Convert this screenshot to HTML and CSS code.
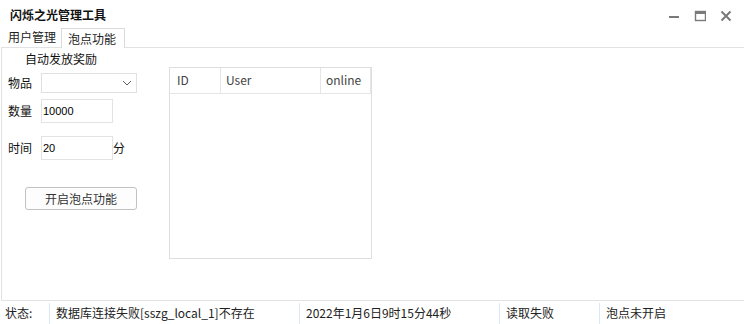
FILE: index.html
```html
<!DOCTYPE html>
<html lang="zh-CN">
<head>
<meta charset="utf-8">
<title>闪烁之光管理工具</title>
<link rel="stylesheet" href="styles.css">
</head>
<body>
<div class="window">
  <div class="titlebar">
    <div class="title">闪烁之光管理工具</div>
    <div class="controls">
      <svg class="ctl" width="12" height="12" viewBox="0 0 12 12"><rect x="1" y="6" width="10" height="2" fill="#7a7a7a"/></svg>
      <svg class="ctl" width="12" height="12" viewBox="0 0 12 12"><rect x="1.5" y="1.5" width="10" height="9" fill="none" stroke="#7a7a7a" stroke-width="1.4"/><rect x="1" y="1" width="11" height="3" fill="#7a7a7a"/></svg>
      <svg class="ctl" width="12" height="12" viewBox="0 0 12 12"><path d="M1.5 1.5 L10.5 10.5 M10.5 1.5 L1.5 10.5" stroke="#7a7a7a" stroke-width="2"/></svg>
    </div>
  </div>
  <div class="tabs">
    <div class="tab">用户管理</div>
    <div class="tab active">泡点功能</div>
  </div>
  <div class="panel">
    <div class="left">
      <div class="group-title">自动发放奖励</div>
      <div class="row row-combo">
        <span class="label">物品</span>
        <div class="combo">
          <svg width="10" height="6" viewBox="0 0 10 6"><path d="M1 1 L5 5 L9 1" fill="none" stroke="#606060" stroke-width="1"/></svg>
        </div>
      </div>
      <div class="row row-qty">
        <span class="label">数量</span>
        <div class="input">10000</div>
      </div>
      <div class="row row-time">
        <span class="label">时间</span>
        <div class="input">20</div>
        <span class="unit">分</span>
      </div>
      <div class="button">开启泡点功能</div>
    </div>
    <div class="listview">
      <div class="lv-header">
        <div class="col col-id">ID</div>
        <div class="col col-user">User</div>
        <div class="col col-online">online</div>
      </div>
    </div>
  </div>
  <div class="statusbar">
    <div class="st st-label">状态:</div>
    <div class="st st-db">数据库连接失败[sszg_local_1]不存在</div>
    <div class="st st-time">2022年1月6日9时15分44秒</div>
    <div class="st st-read">读取失败</div>
    <div class="st st-pd">泡点未开启</div>
  </div>
</div>
</body>
</html>
```
FILE: styles.css
```css
* { box-sizing: border-box; }
html, body { margin: 0; padding: 0; background: #fff; }
body {
  font-family: "Noto Sans CJK SC", "Microsoft YaHei", sans-serif;
  font-size: 12px;
  color: #111;
  width: 744px;
  height: 324px;
  overflow: hidden;
}
.window { width: 744px; height: 324px; display: flex; flex-direction: column; }

.titlebar {
  height: 27px;
  display: flex;
  align-items: center;
  justify-content: space-between;
  padding: 2px 0 0 10px;
}
.title { font-weight: bold; line-height: 14px; font-size: 12px; color: #111; }
.controls { display: flex; gap: 14px; padding-right: 12px; padding-top: 2px; }
.ctl { display: block; }

.tabs {
  height: 20px;
  display: flex;
  align-items: flex-end;
  padding-left: 3px;
}
.tab {
  height: 19px;
  line-height: 18px;
  padding: 0 5px 0 5px;
  color: #222;
}
.tab.active {
  margin-left: 0px;
  width: 64px;
  padding: 0 6px;
  border: 1px solid #d9d9d9;
  border-bottom: none;
  height: 20px;
  line-height: 19px;
  background: #fff;
  position: relative;
  z-index: 1;
  margin-bottom: -1px;
}

.panel {
  margin-left: 1px;
  width: 743px;
  height: 254px;
  border-top: 1px solid #e2e2e2;
  border-left: 1px solid #e2e2e2;
  border-bottom: 1px solid #e2e2e2;
  display: flex;
  align-items: flex-start;
}

.left { width: 167px; padding-left: 6px; display: flex; flex-direction: column; }
.group-title { margin-left: 17px; margin-top: 4px; line-height: 14px; height: 14px; }
.row { display: flex; align-items: center; }
.label { width: 33px; line-height: 14px; }
.row-combo { margin-top: 7px; height: 20px; }
.row-qty { margin-top: 6px; height: 24px; }
.row-time { margin-top: 13px; height: 24px; }

.combo {
  width: 96px;
  height: 20px;
  border: 1px solid #e0e0e0;
  display: flex;
  align-items: center;
  justify-content: flex-end;
  padding-right: 4px;
}
.combo svg { display: block; }
.input {
  width: 72px;
  height: 24px;
  border: 1px solid #e3e3e3;
  font-family: "Liberation Sans", Arial, sans-serif;
  font-size: 11px;
  line-height: 22px;
  padding-left: 1px;
  color: #000;
}
.unit { line-height: 14px; }

.button {
  margin-top: 27px;
  margin-left: 17px;
  width: 112px;
  height: 23px;
  border: 1px solid #c2c2c2;
  border-radius: 3px;
  background: #fdfdfd;
  text-align: center;
  line-height: 21px;
  color: #333;
}

.listview {
  margin-top: 19px;
  width: 203px;
  height: 192px;
  border: 1px solid #dedede;
}
.lv-header {
  display: flex;
  height: 26px;
  border-bottom: 1px solid #e5e5e5;
  color: #444;
}
.col { line-height: 24px; border-right: 1px solid #e5e5e5; }
.col-id { width: 51px; padding-left: 7px; }
.col-user { width: 100px; padding-left: 5px; }
.col-online { width: 50px; padding-left: 5px; }

.statusbar {
  height: 23px;
  display: flex;
  align-items: stretch;
  padding-top: 2px;
  color: #222;
}
.st { line-height: 20px; padding-left: 6px; border-right: 1px solid #dce7f3; }
.st-label { width: 50px; padding-left: 5px; }
.st-db { width: 250px; }
.st-time { width: 200px; }
.st-read { width: 100px; }
.st-pd { width: 140px; border-right: none; }
```
